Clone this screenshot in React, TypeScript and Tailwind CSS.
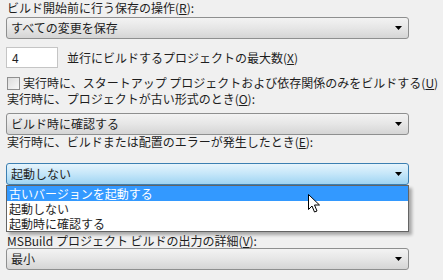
import type { ReactNode } from "react";

const FONT = { fontFamily: '"Noto Sans CJK JP", "Noto Sans", sans-serif' };

function Arrow() {
  return (
    <svg width="7" height="4" viewBox="0 0 7 4" className="shrink-0">
      <path d="M0 0H7L3.5 4Z" fill="#000" />
    </svg>
  );
}

function Combo({ text, focused, className = "" }: { text: string; focused?: boolean; className?: string }) {
  return (
    <div
      className={`flex h-[22px] w-[403px] items-center justify-between rounded-[3px] border pl-[4px] pr-[6px] ${
        focused
          ? "border-[#3c7fb1] bg-gradient-to-b from-[#e6f4fc] via-[#c4e6f9] to-[#9fd4f2]"
          : "border-[#8e8f8f] bg-gradient-to-b from-[#f3f3f3] via-[#e6e6e6] to-[#d5d5d5]"
      } ${className}`}
    >
      <span className="leading-[16px] text-[#1e1e1e]">{text}</span>
      <Arrow />
    </div>
  );
}

function Label({ children, className = "" }: { children: ReactNode; className?: string }) {
  return <div className={`h-[16px] pl-[1px] leading-[16px] text-[#1e1e1e] ${className}`}>{children}</div>;
}

function Cursor() {
  return (
    <svg width="12" height="19" viewBox="0 0 12 19" className="absolute left-[308px] top-[194px]">
      <path d="M0.5 0.5V15.5L4 12L6.5 18L9 17L6.5 11H11.5Z" fill="#fff" stroke="#000" strokeWidth="1" strokeLinejoin="round" />
    </svg>
  );
}

export default function App() {
  const items = ["古いバージョンを起動する", "起動しない", "起動時に確認する"];
  return (
    <div className="relative h-[280px] w-[443px] overflow-hidden bg-[#f0f0f0] text-[12px]" style={FONT}>
      <div className="flex flex-col pl-[6px]">
        <Label>
          ビルド開始前に行う保存の操作(<u>R</u>):
        </Label>
        <Combo text="すべての変更を保存" className="mt-[1px]" />

        <div className="mt-[8px] flex h-[21px] items-center">
          <div className="flex h-[21px] w-[52px] items-center border border-[#c5c5c5] bg-white pl-[5px] text-[#1e1e1e]">4</div>
          <span className="ml-[9px] text-[#1e1e1e]">
            並行にビルドするプロジェクトの最大数(<u>X</u>)
          </span>
        </div>

        <div className="mt-[7px] flex h-[16px] items-center">
          <div className="ml-[1px] h-[13px] w-[13px] border border-[#8f8f8f] bg-gradient-to-br from-[#dcdcdc] to-[#f8f8f8]" />
          <span className="ml-[3px] leading-[16px] text-[#1e1e1e]">
            実行時に、スタートアップ プロジェクトおよび依存関係のみをビルドする(<u>U</u>)
          </span>
        </div>

        <Label>
          実行時に、プロジェクトが古い形式のとき(<u>O</u>):
        </Label>
        <Combo text="ビルド時に確認する" className="mt-[6px]" />

        <Label className="-mt-[1px]">
          実行時に、ビルドまたは配置のエラーが発生したとき(<u>E</u>):
        </Label>
        <Combo text="起動しない" focused className="mt-[13px]" />

        <Label className="mt-[48px]">
          MSBuild プロジェクト ビルドの出力の詳細(<u>V</u>):
        </Label>
        <Combo text="最小" className="-mt-[1px]" />
      </div>

      <div className="absolute left-[6px] top-[185px] w-[403px] border border-[#646464] bg-white shadow-[3px_3px_3px_rgba(0,0,0,0.3)]">
        {items.map((t, i) => (
          <div
            key={t}
            className={`h-[15px] pl-[2px] leading-[15px] ${i === 0 ? "bg-[#3399ff] text-white" : "text-[#1e1e1e]"}`}
          >
            {t}
          </div>
        ))}
      </div>

      <Cursor />
    </div>
  );
}
